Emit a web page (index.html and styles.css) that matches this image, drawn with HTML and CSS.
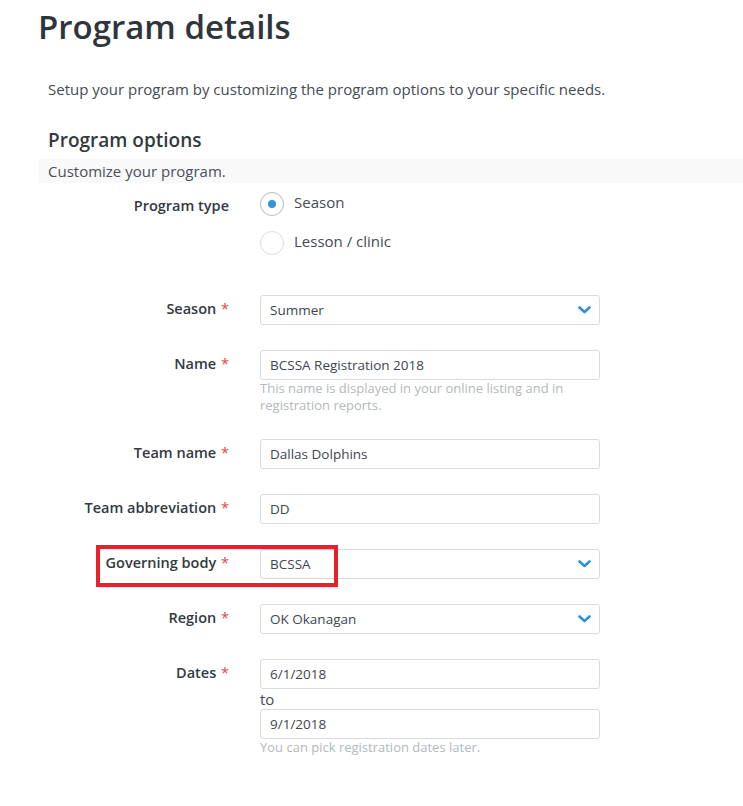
FILE: index.html
```html
<!DOCTYPE html>
<html lang="en">
<head>
<meta charset="utf-8">
<title>Program details</title>
<link rel="stylesheet" href="styles.css">
</head>
<body>
<div class="page">
  <h1 class="title">Program details</h1>
  <p class="intro">Setup your program by customizing the program options to your specific needs.</p>
  <h2 class="section-title">Program options</h2>
  <div class="band">Customize your program.</div>

  <div class="form">
    <div class="row row-type">
      <div class="label">Program type</div>
      <div class="field radios">
        <label class="radio"><span class="circle checked"></span><span class="radio-text">Season</span></label>
        <label class="radio"><span class="circle"></span><span class="radio-text">Lesson / clinic</span></label>
      </div>
    </div>

    <div class="row">
      <div class="label">Season <span class="req">*</span></div>
      <div class="field">
        <div class="select"><span>Summer</span><svg class="chev" width="13" height="8" viewBox="0 0 13 8"><path d="M1.5 1.5 L6.5 6 L11.5 1.5" fill="none" stroke="#2f8fd8" stroke-width="2.6" stroke-linecap="round" stroke-linejoin="round"/></svg></div>
      </div>
    </div>

    <div class="row">
      <div class="label">Name <span class="req">*</span></div>
      <div class="field">
        <div class="input">BCSSA Registration 2018</div>
        <div class="help">This name is displayed in your online listing and in registration reports.</div>
      </div>
    </div>

    <div class="row">
      <div class="label">Team name <span class="req">*</span></div>
      <div class="field"><div class="input">Dallas Dolphins</div></div>
    </div>

    <div class="row">
      <div class="label">Team abbreviation <span class="req">*</span></div>
      <div class="field"><div class="input">DD</div></div>
    </div>

    <div class="row row-highlight">
      <div class="label">Governing body <span class="req">*</span></div>
      <div class="field">
        <div class="select"><span>BCSSA</span><svg class="chev" width="13" height="8" viewBox="0 0 13 8"><path d="M1.5 1.5 L6.5 6 L11.5 1.5" fill="none" stroke="#2f8fd8" stroke-width="2.6" stroke-linecap="round" stroke-linejoin="round"/></svg></div>
      </div>
      <div class="highlight"></div>
    </div>

    <div class="row">
      <div class="label">Region <span class="req">*</span></div>
      <div class="field">
        <div class="select"><span>OK Okanagan</span><svg class="chev" width="13" height="8" viewBox="0 0 13 8"><path d="M1.5 1.5 L6.5 6 L11.5 1.5" fill="none" stroke="#2f8fd8" stroke-width="2.6" stroke-linecap="round" stroke-linejoin="round"/></svg></div>
      </div>
    </div>

    <div class="row">
      <div class="label">Dates <span class="req">*</span></div>
      <div class="field">
        <div class="input">6/1/2018</div>
        <div class="to">to</div>
        <div class="input">9/1/2018</div>
        <div class="help">You can pick registration dates later.</div>
      </div>
    </div>
  </div>
</div>
</body>
</html>
```

FILE: styles.css
```css
html, body {
  margin: 0;
  padding: 0;
  background: #ffffff;
}

body {
  font-family: "Open Sans", "Noto Sans", "Liberation Sans", sans-serif;
  color: #3d4349;
}

.page {
  padding-left: 38px;
}

.title {
  margin: 0;
  padding-top: 8px;
  font-size: 33px;
  line-height: 38px;
  font-weight: 600;
  color: #2f353d;
}

.intro {
  margin: 34px 0 0 10px;
  font-size: 15px;
  line-height: 18px;
  color: #454b52;
}

.section-title {
  margin: 30px 0 0 10px;
  font-size: 19px;
  line-height: 24px;
  font-weight: 600;
  color: #33393f;
}

.band {
  margin-top: 7px;
  height: 24px;
  line-height: 24px;
  padding-left: 10px;
  background: #f9f9f9;
  font-size: 15px;
  color: #4a5057;
}

.form {
  padding-top: 9px;
}

.row {
  position: relative;
  display: grid;
  grid-template-columns: 191px 340px;
  column-gap: 31px;
  margin-bottom: 25px;
}

.row-type {
  margin-bottom: 40px;
}

.label {
  text-align: right;
  font-size: 14.5px;
  font-weight: 600;
  color: #33393f;
  line-height: 18px;
  padding-top: 5px;
}

.req {
  color: #e0474c;
  font-weight: 400;
  margin-left: 1px;
}

.radios {
  display: flex;
  flex-direction: column;
  gap: 15px;
}

.radio {
  display: flex;
  align-items: center;
  gap: 10px;
  height: 24px;
  font-size: 15px;
  color: #454b52;
}

.circle {
  box-sizing: border-box;
  width: 24px;
  height: 24px;
  border-radius: 50%;
  border: 1px solid #dcdcdc;
  display: flex;
  align-items: center;
  justify-content: center;
  background: #fff;
}

.circle.checked {
  border-color: #b8b8b8;
}

.circle.checked::after {
  content: "";
  width: 8px;
  height: 8px;
  border-radius: 50%;
  background: #3592dc;
}

.radio-text {
  margin-top: -4px;
}

.input, .select {
  box-sizing: border-box;
  height: 30px;
  border: 1px solid #d8dbde;
  border-radius: 3px;
  padding: 0 10px 0 9px;
  font-size: 13.5px;
  line-height: 28px;
  color: #40464d;
  background: #fff;
}

.select {
  display: flex;
  align-items: center;
  justify-content: space-between;
  padding-right: 8px;
}

.chev {
  display: block;
}

.help {
  font-size: 13px;
  line-height: 17px;
  color: #b3b8bd;
  margin-top: 0;
}

.to {
  font-size: 15px;
  line-height: 20px;
  color: #454b52;
}

.highlight {
  position: absolute;
  left: 58px;
  top: -4px;
  width: 242px;
  height: 42px;
  box-sizing: border-box;
  border: 4px solid #e8202a;
  pointer-events: none;
}
```
